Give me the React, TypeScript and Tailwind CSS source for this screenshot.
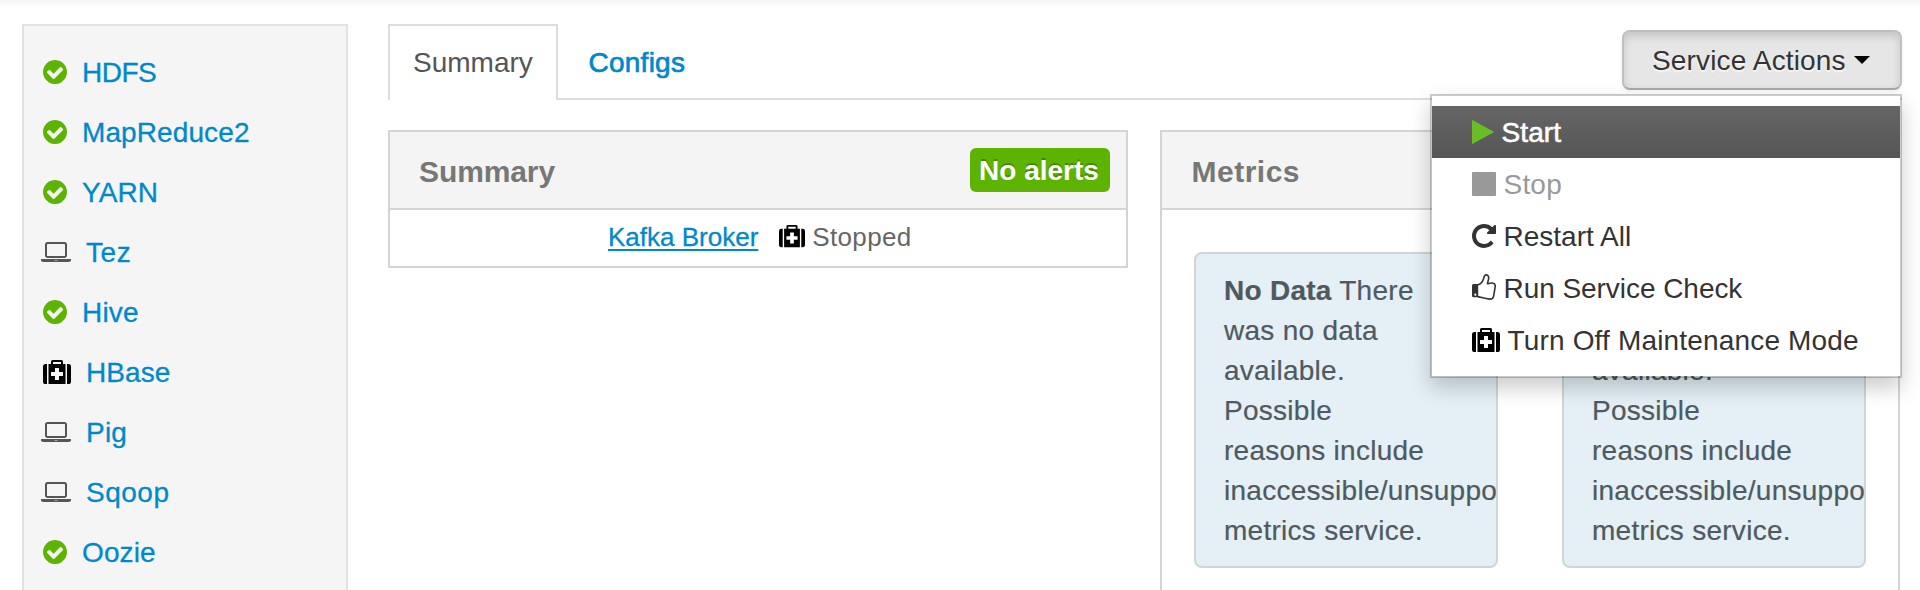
import type { ReactNode } from "react";

type IconName = "check" | "laptop" | "medkit" | "play" | "stop" | "repeat" | "thumb";

function Icon({ name, small }: { name: IconName; small?: boolean }) {
  switch (name) {
    case "check":
      return (
        <svg className="ml-[2px] mr-[15px] h-6 w-6 shrink-0 fill-[#5cb300]" viewBox="0 0 1536 1536">
          <path d="M1284 606q0-28-18-46l-91-90q-19-19-45-19t-45 19l-408 407-226-226q-19-19-45-19t-45 19l-91 90q-18 18-18 46 0 27 18 45l362 362q19 19 45 19 27 0 46-19l543-543q18-18 18-45zm252 162q0 209-103 385.5t-279.5 279.5-385.5 103-385.5-103-279.5-279.5-103-385.5 103-385.5 279.5-279.5 385.5-103 385.5 103 279.5 279.5 103 385.5z" />
        </svg>
      );
    case "laptop":
      return (
        <svg className="mr-[15px] h-5 w-[30px] shrink-0 fill-[#555]" viewBox="0 128 1920 1280">
          <path d="M416 1152q-66 0-113-47t-47-113v-704q0-66 47-113t113-47h1088q66 0 113 47t47 113v704q0 66-47 113t-113 47h-1088zm-32-864v704q0 13 9.5 22.5t22.5 9.5h1088q13 0 22.5-9.5t9.5-22.5v-704q0-13-9.5-22.5t-22.5-9.5h-1088q-13 0-22.5 9.5t-9.5 22.5zm1376 928h160v96q0 40-47 68t-113 28h-1600q-66 0-113-28t-47-68v-96h1760zm-720 96q16 0 16-16t-16-16h-160q-16 0-16 16t16 16h160z" />
        </svg>
      );
    case "medkit":
      return (
        <svg
          className={small ? "h-[22.3px] w-[26px] shrink-0 fill-black" : "h-6 w-7 shrink-0 fill-black"}
          viewBox="0 0 28 24"
        >
          <path
            fillRule="evenodd"
            d="M4 4V24H2.6Q0 24 0 21.4V6.6Q0 4 2.6 4ZM24 4H25.4Q28 4 28 6.6V21.4Q28 24 25.4 24H24ZM5.5 4H8V1.5Q8 0 9.5 0H18.5Q20 0 20 1.5V4H22.5V24H5.5ZM10 2V4H18V2ZM12 8V12H8V16H12V20H16V16H20V12H16V8Z"
          />
        </svg>
      );
    case "play":
      return (
        <svg className="h-6 w-[22px] shrink-0 fill-[#69be28]" viewBox="0 0 22 24">
          <path d="M0 .6Q0-.2.8.3L21.4 11.5Q22.3 12 21.4 12.5L.8 23.7Q0 24.2 0 23.4Z" />
        </svg>
      );
    case "stop":
      return (
        <svg className="h-6 w-6 shrink-0 fill-[#999]" viewBox="0 0 24 24">
          <rect width="24" height="24" rx="1" />
        </svg>
      );
    case "repeat":
      return (
        <svg className="h-6 w-6 shrink-0 fill-[#333]" viewBox="128 128 1536 1536">
          <path d="M1664 256v448q0 26-19 45t-45 19h-448q-42 0-59-40-17-39 14-69l138-138q-148-137-349-137-104 0-198.5 40.5t-163.5 109.5-109.5 163.5-40.5 198.5 40.5 198.5 109.5 163.5 163.5 109.5 198.5 40.5q119 0 225-52t179-147q7-10 23-12 15 0 25 9l137 138q9 8 9.5 20.5t-7.5 22.5q-109 132-264 204.5t-327 72.5q-156 0-298-61t-245-164-164-245-61-298 61-298 164-245 245-164 298-61q147 0 284.5 55.5t244.5 156.5l130-129q29-31 70-14 39 17 39 59z" />
        </svg>
      );
    case "thumb":
      return (
        <svg className="-mt-0.5 h-[26px] w-6 shrink-0" viewBox="0 0 24 26">
          <path
            fill="#333"
            fillRule="evenodd"
            d="M1.5 10H6.2V23.3H1.5Q0 23.3 0 21.8V11.5Q0 10 1.5 10ZM3.3 19.6a1.1 1.1 0 1 0 0 2.2 1.1 1.1 0 1 0 0-2.2Z"
          />
          <path
            fill="none"
            stroke="#333"
            strokeWidth="1.6"
            strokeLinejoin="round"
            d="M6 10.8C8.6 10.2 10.8 7.6 11.7 4.2C12.3 1.9 12.5.9 14 .9C15.7.9 16.8 2.3 16.7 4.2C16.6 6.2 15.4 8 15.5 9.7C17.3 9.2 19 8.7 20.5 9C22.6 9.4 23.4 10.8 23.2 12.6L21.6 22.3C21.1 24.6 19.4 25.2 17.5 25.1C13.5 24.9 10 23.5 6 22.6"
          />
        </svg>
      );
  }
}

interface Service {
  name: string;
  icon: IconName;
  tracking: string;
}

const services: Service[] = [
  { name: "HDFS", icon: "check", tracking: "tracking-[-0.5px]" },
  { name: "MapReduce2", icon: "check", tracking: "tracking-[0.1px]" },
  { name: "YARN", icon: "check", tracking: "tracking-[0.1px]" },
  { name: "Tez", icon: "laptop", tracking: "tracking-[0.6px]" },
  { name: "Hive", icon: "check", tracking: "tracking-[0.2px]" },
  { name: "HBase", icon: "medkit", tracking: "tracking-[0.1px]" },
  { name: "Pig", icon: "laptop", tracking: "tracking-[0.2px]" },
  { name: "Sqoop", icon: "laptop", tracking: "tracking-[0.5px]" },
  { name: "Oozie", icon: "check", tracking: "tracking-[0.1px]" },
];

function Sidebar() {
  return (
    <nav className="mt-6 h-[700px] w-[326px] shrink-0 border-2 border-[#e2e2e2] bg-[#f5f5f5] pt-4">
      <ul>
        {services.map((s) => (
          <li
            key={s.name}
            className="flex h-[60px] items-center pl-[17px] text-[#0088cc] [text-shadow:0_2px_0_rgba(255,255,255,0.5)] [-webkit-text-stroke:0.3px_#0088cc]"
          >
            {s.icon === "medkit" ? (
              <span className="ml-[2px] mr-[15px] flex">
                <Icon name="medkit" />
              </span>
            ) : (
              <Icon name={s.icon} />
            )}
            <a className={`pt-0.5 ${s.tracking}`}>{s.name}</a>
          </li>
        ))}
      </ul>
    </nav>
  );
}

interface PanelProps {
  title: string;
  titleClass: string;
  badge?: string;
  className: string;
  children: ReactNode;
}

function Panel({ title, titleClass, badge, className, children }: PanelProps) {
  return (
    <section className={className}>
      <header className="flex h-[78px] items-center justify-between border-b-2 border-[#d4d4d4] bg-[#f4f4f4] pr-4">
        <h2 className={`pt-[3px] text-[30px] font-bold leading-[40px] text-[#777] ${titleClass}`}>{title}</h2>
        {badge && (
          <span className="flex h-11 w-[140px] items-center justify-center rounded-md bg-[#5cb300] pr-0.5 pt-0.5 font-bold text-white [text-shadow:0_-2px_0_rgba(0,0,0,0.25)]">
            {badge}
          </span>
        )}
      </header>
      {children}
    </section>
  );
}

function NoData() {
  return (
    <div className="h-[316px] w-[304px] shrink-0 overflow-hidden rounded-lg border-2 border-[#ced6d8] bg-[#e4f0f6] px-7 pt-[17px] leading-[40px] tracking-[0.27px] text-[#4f5a60] [-webkit-text-stroke:0.2px_#4f5a60]">
      <p className="whitespace-nowrap">
        <b>No Data</b> There
        <br />
        was no data
        <br />
        available.
        <br />
        Possible
        <br />
        reasons include
        <br />
        inaccessible/unsupported
        <br />
        metrics service.
      </p>
    </div>
  );
}

interface Action {
  label: string;
  icon: IconName;
  row: string;
}

const actions: Action[] = [
  {
    label: "Start",
    icon: "play",
    row: "bg-linear-to-b from-[#666] to-[#555] text-white tracking-[0.1px] [-webkit-text-stroke:0.6px_#fff]",
  },
  { label: "Stop", icon: "stop", row: "text-[#999] tracking-[0.2px]" },
  { label: "Restart All", icon: "repeat", row: "text-[#333]" },
  { label: "Run Service Check", icon: "thumb", row: "text-[#333] tracking-[-0.05px]" },
  { label: "Turn Off Maintenance Mode", icon: "medkit", row: "text-[#333] tracking-[0.17px]" },
];

function ServiceActions() {
  return (
    <div className="relative mt-[30px] h-[60px] w-[280px]">
      <button className="flex h-full w-full items-center rounded-lg border-2 border-[#bfbfbf] border-b-[#a8a8a8] bg-[#e6e6e6] pl-7 tracking-[0.15px] text-[#333] shadow-[inset_0_4px_8px_rgba(0,0,0,0.15),0_2px_4px_rgba(0,0,0,0.05)] [text-shadow:0_2px_2px_rgba(255,255,255,0.75)]">
        <span className="pt-px">Service Actions</span>
        <svg className="ml-2 h-2 w-4 fill-black" viewBox="0 0 16 8">
          <path d="M0 0H16L8 8Z" />
        </svg>
      </button>
      <ul className="absolute right-0 top-16 z-10 w-[472px] border-2 border-black/20 bg-white bg-clip-padding py-2.5 shadow-[0_10px_20px_rgba(0,0,0,0.2)]">
        {actions.map((a) => (
          <li key={a.label} className={`flex h-[52px] items-center gap-[7.5px] whitespace-nowrap pl-10 ${a.row}`}>
            <Icon name={a.icon} />
            <span className="pt-0.5">{a.label}</span>
          </li>
        ))}
      </ul>
    </div>
  );
}

export default function App() {
  return (
    <div className="h-[590px] w-[1920px] overflow-hidden bg-white bg-[linear-gradient(to_bottom,#f5f5f5,#fff_9px)] font-['Liberation_Sans',Arial,sans-serif] text-[28px] leading-[40px]">
      <div className="flex pl-[22px]">
        <Sidebar />
        <main className="ml-10 w-[1514px] shrink-0">
          <div className="flex h-[100px] justify-between border-b-2 border-[#ddd]">
            <div className="mt-6 flex h-[76px]">
              <a className="w-[170px] border-2 border-b-0 border-[#ddd] bg-white pl-[23px] pt-[17px] text-[#555]">
                Summary
              </a>
              <a className="pl-[30.5px] pt-[19px] tracking-[0.25px] text-[#0088cc] [-webkit-text-stroke:0.7px_#0088cc]">
                Configs
              </a>
            </div>
            <ServiceActions />
          </div>
          <div className="mt-[30px] flex gap-8">
            <Panel
              title="Summary"
              titleClass="pl-[29px] tracking-[-0.1px]"
              badge="No alerts"
              className="h-[138px] w-[740px] border-2 border-[#d4d4d4]"
            >
              <div className="flex h-[53px] items-center pl-[218px] text-[26px]">
                <a className="text-[#0088cc] underline decoration-2 underline-offset-[3px] [-webkit-text-stroke:0.3px_#0088cc]">
                  Kafka Broker
                </a>
                <span className="ml-[21px] mr-[7px] flex">
                  <Icon name="medkit" small />
                </span>
                <span className="tracking-[0.35px] text-[#666]">Stopped</span>
              </div>
            </Panel>
            <Panel
              title="Metrics"
              titleClass="pl-[29.5px] tracking-[0.5px]"
              className="h-[600px] w-[740px] border-2 border-[#d4d4d4]"
            >
              <div className="flex gap-16 pl-8 pt-[42px]">
                <NoData />
                <NoData />
              </div>
            </Panel>
          </div>
        </main>
      </div>
    </div>
  );
}
